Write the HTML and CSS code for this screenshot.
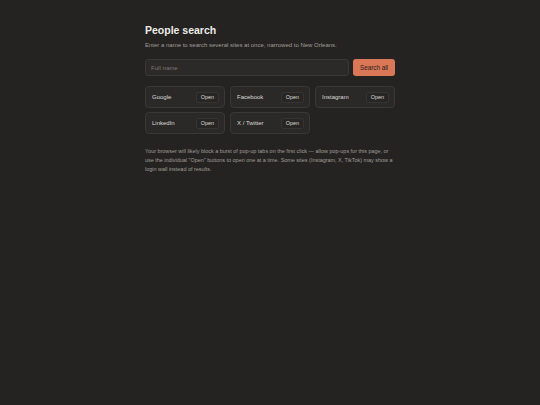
FILE: index.html
```html
<!DOCTYPE html>
<html lang="en">
<head>
  <meta charset="UTF-8">
  <meta name="viewport" content="width=device-width, initial-scale=1.0">
  <title>People search</title>
  <link rel="stylesheet" href="styles.css">
</head>
<body>
  <main class="wrap">
    <h1>People search</h1>
    <p class="lead">Enter a name to search several sites at once, narrowed to New Orleans.</p>

    <!-- search row -->
    <form class="search" onsubmit="return false">
      <input type="text" class="name-input" placeholder="Full name">
      <button type="submit" class="search-all">Search all</button>
    </form>

    <!-- one card per site -->
    <div class="sites">
      <div class="site"><span>Google</span><button class="open">Open</button></div>
      <div class="site"><span>Facebook</span><button class="open">Open</button></div>
      <div class="site"><span>Instagram</span><button class="open">Open</button></div>
      <div class="site"><span>LinkedIn</span><button class="open">Open</button></div>
      <div class="site"><span>X / Twitter</span><button class="open">Open</button></div>
    </div>

    <p class="note">Your browser will likely block a burst of pop-up tabs on the first click — allow pop-ups for this page, or use the individual "Open" buttons to open one at a time. Some sites (Instagram, X, TikTok) may show a login wall instead of results.</p>
  </main>
</body>
</html>
```

FILE: styles.css
```css
:root {
  --bg: #242321;
  --card-bg: #2a2927;
  --border: #3a3835;
  --text: #ecebe8;
  --muted: #a19d96;
  --accent: #d97757;
}

body {
  margin: 0;
  background-color: var(--bg);
  color: var(--text);
  font-family: "Liberation Sans", Arial, sans-serif;
}

.wrap {
  width: 250px;
  margin: 0 auto;
  padding-top: 24px;
}

h1 {
  margin: 0;
  font-size: 10.5px;
  font-weight: bold;
  line-height: 13px;
}

.lead {
  margin: 4px 0 0;
  font-size: 6px;
  line-height: 8px;
  color: var(--muted);
}

.search {
  display: flex;
  gap: 4px;
  margin-top: 10px;
}

.name-input {
  flex: 1;
  height: 17px;
  box-sizing: border-box;
  padding: 0 5px;
  border: 1px solid var(--border);
  border-radius: 3px;
  background-color: #2b2a28;
  color: var(--text);
  font-family: inherit;
  font-size: 6.1px;
  outline: none;
}

.name-input::placeholder {
  color: #7b7771;
}

.search-all {
  width: 42px;
  height: 17px;
  padding: 0;
  border: none;
  border-radius: 3px;
  background-color: var(--accent);
  color: #2a1d17;
  font-family: inherit;
  font-size: 6.3px;
  cursor: pointer;
}

.sites {
  display: grid;
  grid-template-columns: repeat(3, 1fr);
  gap: 4px 5px;
  margin-top: 10px;
}

.site {
  display: flex;
  align-items: center;
  justify-content: space-between;
  height: 22px;
  box-sizing: border-box;
  padding: 0 5px 0 6px;
  border: 1px solid var(--border);
  border-radius: 4px;
  background-color: var(--card-bg);
  font-size: 6px;
  color: #dcdad5;
}

.open {
  height: 11px;
  padding: 0 4px;
  border: 1px solid #363432;
  border-radius: 2px;
  background-color: #272624;
  color: #dcdad5;
  font-family: inherit;
  font-size: 5.4px;
  cursor: pointer;
}

.note {
  margin: 13px 0 0;
  font-size: 5.45px;
  line-height: 8.8px;
  color: var(--muted);
}
```
